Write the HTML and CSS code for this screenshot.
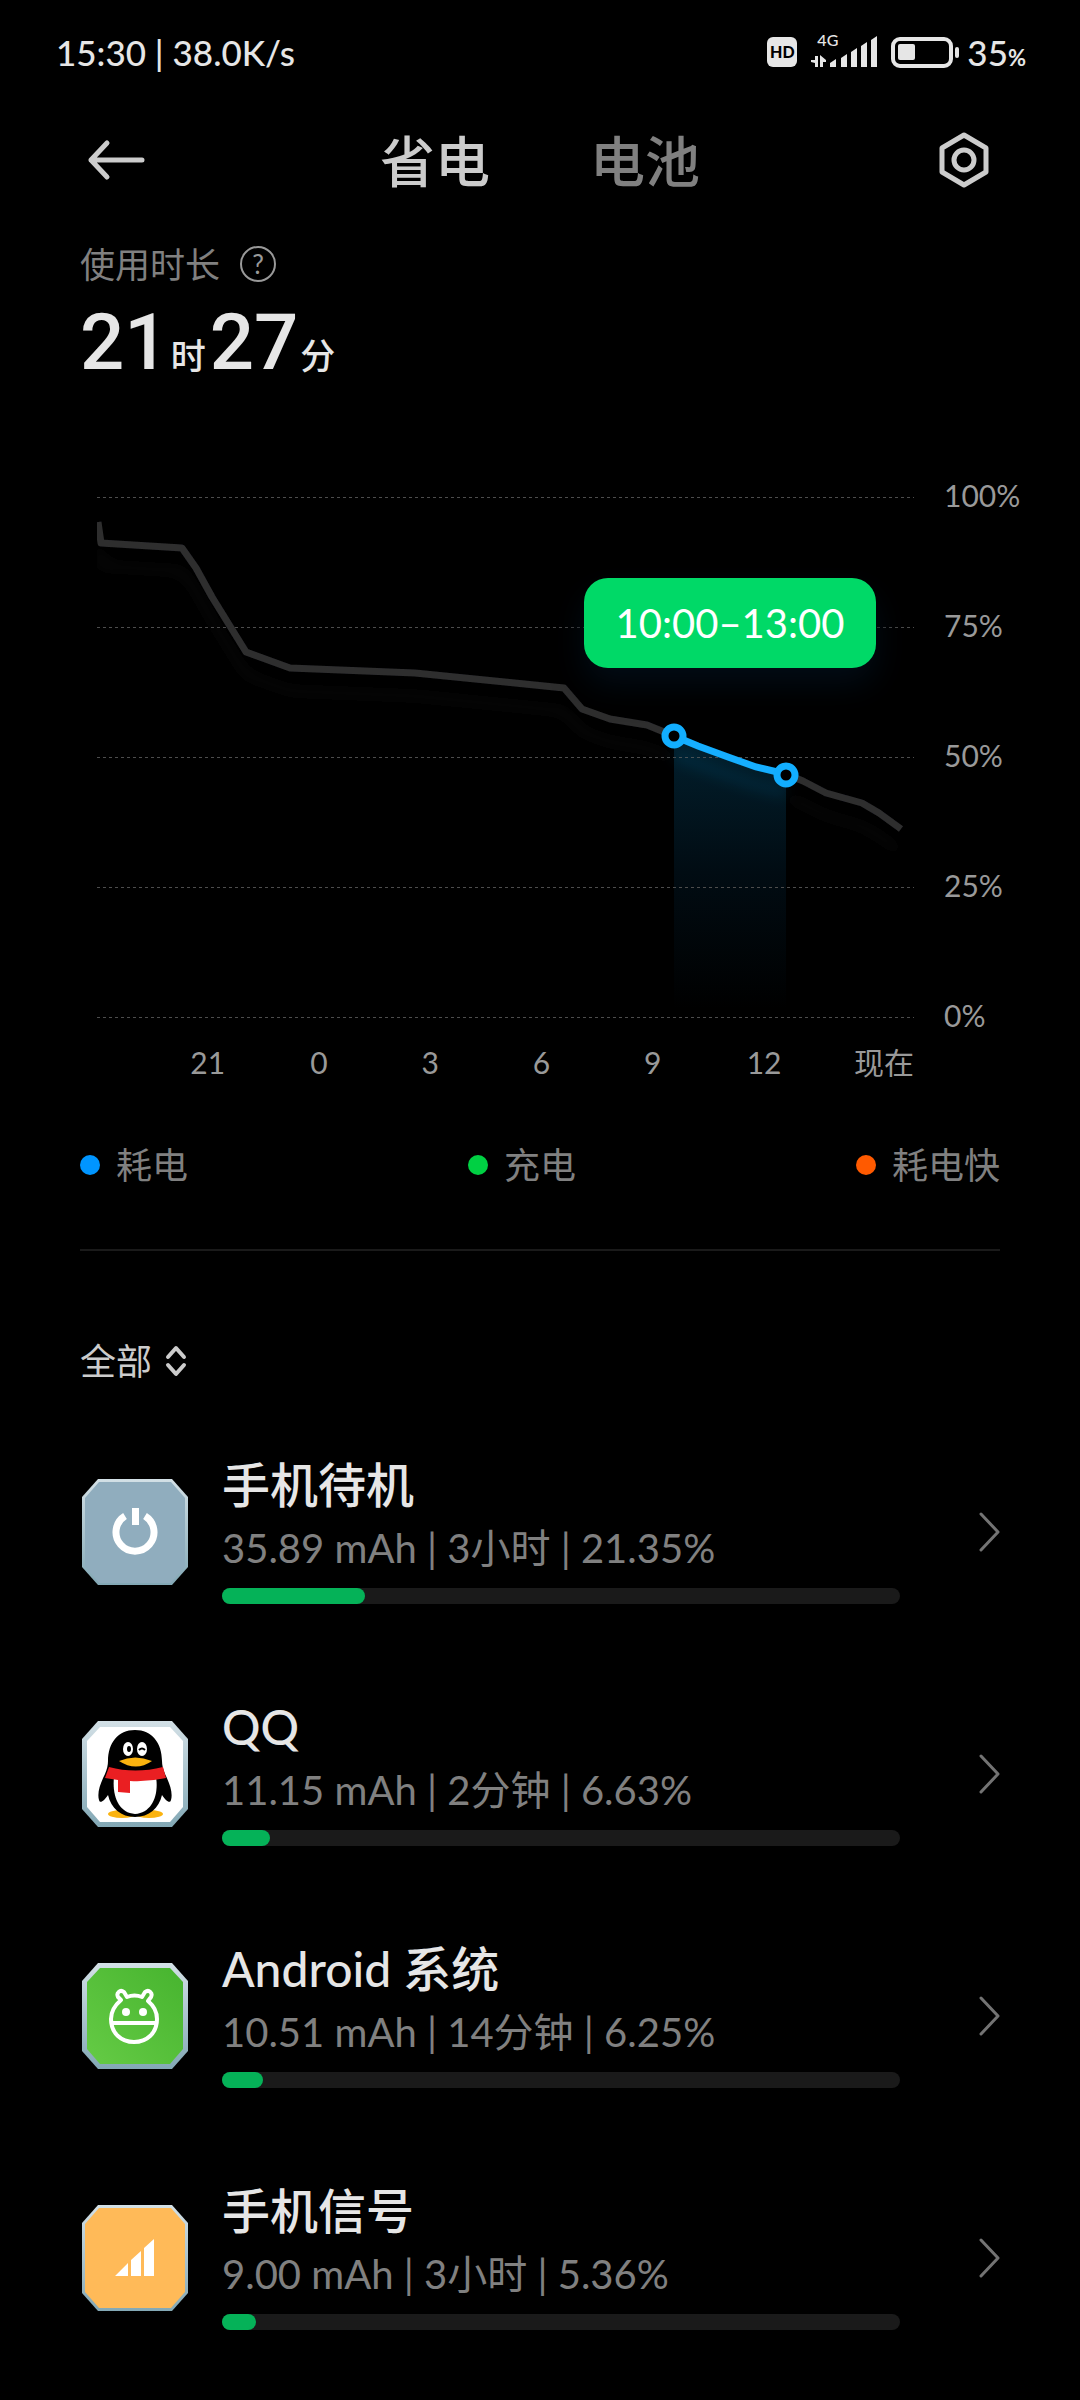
FILE: index.html
```html
<!DOCTYPE html>
<html lang="zh-CN">
<head>
    <meta charset="UTF-8">
    <meta name="viewport" content="width=device-width, initial-scale=1.0">
    <title>省电与电池</title>
    <link rel="stylesheet" href="styles.css">
</head>
<body>
    <div class="status-bar">
        <span class="clock">15:30 | 38.0K/s</span>
        <div class="status-icons">
            <span class="hd">HD</span>
            <div class="network">
                <span class="network-type">4G</span>
                <svg width="66" height="32" viewBox="0 0 66 32" fill="#e6e6e6">
                    <path d="M4 20h3v11H4v-4L0 26v-2h4zM9 19l6 5v2h-3v5H9z"/>
                    <path d="M19 27l6-4v8h-6zM30 22l6-4v13h-6zM40 16l6-4v19h-6zM50 10l6-4v25h-6zM60 4l6-4v31h-6z"/>
                </svg>
            </div>
            <svg width="68" height="31" viewBox="0 0 68 31">
                <rect x="2" y="2" width="58" height="27" rx="7" fill="none" stroke="#e6e6e6" stroke-width="4"/>
                <rect x="7" y="7" width="17" height="16" rx="2" fill="#e6e6e6"/>
                <rect x="64" y="10" width="4" height="11" rx="2" fill="#e6e6e6"/>
            </svg>
            <span class="charge">35<small>%</small></span>
        </div>
    </div>

    <header class="top-bar">
        <button type="button" class="icon-button" aria-label="返回">
            <svg width="60" height="42" viewBox="0 0 60 42" fill="none" stroke="#ccc" stroke-width="5" stroke-linecap="round" stroke-linejoin="round">
                <path d="M56 21H5M21 4L5 21l16 17"/>
            </svg>
        </button>
        <nav class="tabs">
            <button type="button" class="tab active">省电</button>
            <button type="button" class="tab">电池</button>
        </nav>
        <button type="button" class="icon-button" aria-label="设置">
            <svg width="52" height="56" viewBox="0 0 52 56" fill="none" stroke="#ccc" stroke-width="5" stroke-linejoin="round">
                <path d="M26 3L48 16v24L26 53 4 40V16z"/>
                <circle cx="26" cy="28" r="10"/>
            </svg>
        </button>
    </header>

    <main>
        <section class="usage">
            <div class="usage-label">
                <span>使用时长</span>
                <button type="button" class="help" aria-label="帮助">?</button>
            </div>
            <div class="usage-time">
                <span class="number">21</span><span class="unit">时</span><span class="number">27</span><span class="unit">分</span>
            </div>
        </section>

        <section class="chart">
            <div class="plot">
                <svg width="100%" viewBox="0 0 817 522" fill="none">
                    <defs>
                        <linearGradient id="area" x1="0" y1="0" x2="0" y2="1">
                            <stop offset="0" stop-color="#02202e"/>
                            <stop offset="0.5" stop-color="#010c13"/>
                            <stop offset="1" stop-color="#000"/>
                        </linearGradient>
                        <filter id="glow" x="-10%" y="-10%" width="120%" height="130%">
                            <feDropShadow dx="0" dy="23" stdDeviation="8" flood-color="#444" flood-opacity="0.12"/>
                        </filter>
                        <filter id="blue-glow" x="-20%" y="-20%" width="140%" height="250%">
                            <feDropShadow dx="0" dy="18" stdDeviation="7" flood-color="#12aeff" flood-opacity="0.14"/>
                        </filter>
                    </defs>
                    <path d="M577 238L601 249 631 260 659 270 689 277V512H577z" fill="url(#area)"/>
                    <g stroke="#4d4d4d" stroke-dasharray="3 3">
                        <path d="M0 .5H817M0 130.500H817M0 260.500H817M0 390.500H817M0 520.500H817"/>
                    </g>
                    <g filter="url(#glow)" stroke="#2d2d2f" stroke-width="7" stroke-linejoin="round">
                        <path d="M1 25L4 46 85 51 99 71 115 100 149 155 193 171 318 176 467 191 485 212 513 222 550 228 577 239"/>
                        <path d="M689 277L706 284 729 296 765 306 782 316 804 332"/>
                    </g>
                    <path d="M577 239L601 249 631 260 659 270 689 277" stroke="#12aeff" stroke-width="7" filter="url(#blue-glow)"/>
                    <g fill="#000" stroke="#12aeff" stroke-width="7">
                        <circle cx="577" cy="239" r="9"/>
                        <circle cx="689" cy="278" r="9"/>
                    </g>
                </svg>
                <div class="tooltip">10:00–13:00</div>
                <div class="hours">
                    <span>21</span><span>0</span><span>3</span><span>6</span><span>9</span><span>12</span>
                    <span class="now">现在</span>
                </div>
            </div>
            <div class="levels">
                <span>100%</span><span>75%</span><span>50%</span><span>25%</span><span>0%</span>
            </div>
        </section>

        <ul class="legend">
            <li class="drain">耗电</li>
            <li class="charging">充电</li>
            <li class="fast">耗电快</li>
        </ul>

        <button type="button" class="filter">
            全部
            <svg width="22" height="32" viewBox="0 0 22 32" fill="none" stroke="#ccc" stroke-width="4" stroke-linecap="round" stroke-linejoin="round">
                <path d="M3 12l8-9 8 9M3 20l8 9 8-9"/>
            </svg>
        </button>

        <ul class="apps">
            <li>
                <a href="#" class="app">
                    <svg class="app-icon" viewBox="0 0 106 106">
                        <defs>
                            <linearGradient id="frame" x1="0" y1="0" x2="0" y2="1">
                                <stop offset="0" stop-color="#d3e0e6"/>
                                <stop offset="1" stop-color="#83a8b5"/>
                            </linearGradient>
                        </defs>
                        <path d="M16 0H90L106 18V88L90 106H16L0 88V18z" fill="url(#frame)"/>
                        <path d="M17 3H89L103 19V87L89 104H17L3 87V19z" fill="#90adbe"/>
                        <path d="M43 37a19 19 0 1 0 20 0" fill="none" stroke="#fff" stroke-width="7"/>
                        <path d="M50 29h7v17h-7z" fill="#fff"/>
                    </svg>
                    <div class="app-body">
                        <h2>手机待机</h2>
                        <p>35.89 mAh | 3小时 | 21.35%</p>
                        <div class="track"><div class="fill" style="width: 21.1%"></div></div>
                    </div>
                    <svg class="chevron" width="22" height="40" viewBox="0 0 22 40"><path d="M3 2l17 18L3 38"/></svg>
                </a>
            </li>
            <li>
                <a href="#" class="app">
                    <svg class="app-icon" viewBox="0 0 106 106">
                        <path d="M16 0H90L106 18V88L90 106H16L0 88V18z" fill="url(#frame)"/>
                        <path d="M18 6H88L101 20V86L88 101H18L5 86V20z" fill="#fff"/>
                        <ellipse cx="40" cy="93" rx="14" ry="4" fill="#fbb30f"/>
                        <ellipse cx="67" cy="93" rx="14" ry="4" fill="#fbb30f"/>
                        <path d="M53 9C36 9 26 22 26 40c0 4-1 8-3 13-5 10-8 19-6 26 1 4 5 1 9-5 3 13 13 22 27 22s24-9 27-22c4 6 8 9 9 5 2-7-1-16-6-26-2-5-3-9-3-13C80 22 70 9 53 9z" fill="#000"/>
                        <path d="M32 56C30 74 36 92 53 93 70 92 77 74 74 56z" fill="#fff"/>
                        <ellipse cx="46" cy="28" rx="5" ry="7" fill="#fff"/>
                        <ellipse cx="60" cy="28" rx="5" ry="7" fill="#fff"/>
                        <ellipse cx="47" cy="28" rx="2" ry="3"/>
                        <path d="M57 29q3-3 6 0" fill="none" stroke="#000" stroke-width="2"/>
                        <path d="M37 40Q53 33 70 40 54 51 37 40z" fill="#fbb30f"/>
                        <path d="M27 46Q53 53 81 46L84 57Q66 61 48 60V72L36 71V59L23 57z" fill="#ea1f22"/>
                    </svg>
                    <div class="app-body">
                        <h2>QQ</h2>
                        <p>11.15 mAh | 2分钟 | 6.63%</p>
                        <div class="track"><div class="fill" style="width: 7.1%"></div></div>
                    </div>
                    <svg class="chevron" width="22" height="40" viewBox="0 0 22 40"><path d="M3 2l17 18L3 38"/></svg>
                </a>
            </li>
            <li>
                <a href="#" class="app">
                    <svg class="app-icon" viewBox="0 0 106 106">
                        <defs>
                            <linearGradient id="green" x1="1" y1="0" x2="0" y2="1">
                                <stop offset="0" stop-color="#47b42f"/>
                                <stop offset="1" stop-color="#65cb45"/>
                            </linearGradient>
                        </defs>
                        <path d="M16 0H90L106 18V88L90 106H16L0 88V18z" fill="url(#frame)"/>
                        <path d="M18 5H88L101 19V86L88 101H18L5 86V19z" fill="url(#green)"/>
                        <g fill="none" stroke="#fff" stroke-width="4" stroke-linejoin="round">
                            <path d="M39 37L36 34C34 30 38 26 42 29L45 34C50 32 55 32 60 34L63 29C67 26 71 30 69 34L66 38C72 43 75 49 75 56 75 70 65 79 52 79S29 70 29 56C29 49 32 43 39 37z"/>
                            <path d="M29 60H75"/>
                        </g>
                        <circle cx="44" cy="49" r="4" fill="#fff"/>
                        <circle cx="61" cy="49" r="4" fill="#fff"/>
                    </svg>
                    <div class="app-body">
                        <h2>Android 系统</h2>
                        <p>10.51 mAh | 14分钟 | 6.25%</p>
                        <div class="track"><div class="fill" style="width: 6.1%"></div></div>
                    </div>
                    <svg class="chevron" width="22" height="40" viewBox="0 0 22 40"><path d="M3 2l17 18L3 38"/></svg>
                </a>
            </li>
            <li>
                <a href="#" class="app">
                    <svg class="app-icon" viewBox="0 0 106 106">
                        <path d="M16 0H90L106 18V88L90 106H16L0 88V18z" fill="url(#frame)"/>
                        <path d="M17 3H89L103 19V87L89 103H17L3 87V19z" fill="#ffba58"/>
                        <path d="M33 71L46 58V71zM49 55L59 46V71H49zM62 43L72 34V71H62z" fill="#fff"/>
                    </svg>
                    <div class="app-body">
                        <h2>手机信号</h2>
                        <p>9.00 mAh | 3小时 | 5.36%</p>
                        <div class="track"><div class="fill" style="width: 5%"></div></div>
                    </div>
                    <svg class="chevron" width="22" height="40" viewBox="0 0 22 40"><path d="M3 2l17 18L3 38"/></svg>
                </a>
            </li>
        </ul>
    </main>
</body>
</html>
```
FILE: styles.css
```css
* {
    box-sizing: border-box;
}

body {
    margin: 0;
    background: #000;
    color: #e6e6e6;
    font-family: Lato, 'Noto Sans CJK SC', sans-serif;
}

button {
    padding: 0;
    border: none;
    background: none;
    color: inherit;
    font: inherit;
    cursor: pointer;
}

ul {
    margin: 0;
    padding: 0;
    list-style: none;
}

svg {
    display: block;
}

/* status bar */
.status-bar {
    display: flex;
    justify-content: space-between;
    align-items: center;
    height: 104px;
    padding: 0 54px 0 56px;
    font-size: 35px;
    font-weight: 500;
}

.status-icons {
    display: flex;
    align-items: center;
    gap: 14px;
}

.hd {
    width: 30px;
    border-radius: 6px;
    background: #e6e6e6;
    color: #000;
    font-size: 16px;
    font-weight: 900;
    line-height: 30px;
    text-align: center;
}

.network {
    position: relative;
}

.network-type {
    position: absolute;
    top: -4px;
    left: 6px;
    font-size: 16px;
    line-height: 16px;
}

.charge {
    margin-left: -6px;
}

.charge small {
    font-size: 22px;
    font-weight: 700;
}

/* header */
.top-bar {
    display: flex;
    justify-content: space-between;
    align-items: center;
    height: 112px;
    padding: 0 90px 0 86px;
}

.tabs {
    display: flex;
    gap: 100px;
    padding: 2px 4px 0 0;
}

.tab {
    color: #808080;
    font-size: 55px;
    font-weight: 500;
    line-height: 80px;
}

.tab.active {
    color: #ccc;
}

main {
    padding: 0 80px;
}

/* usage time */
.usage-label {
    display: flex;
    align-items: center;
    gap: 20px;
    height: 52px;
    margin-top: 22px;
    color: #808080;
    font-size: 35px;
    line-height: 52px;
}

.help {
    width: 36px;
    height: 36px;
    border: 2px solid #999;
    border-radius: 50%;
    color: #999;
    font-size: 26px;
    line-height: 32px;
}

.usage-time {
    display: flex;
    align-items: baseline;
    height: 106px;
    line-height: 106px;
}

.number {
    font-family: Roboto, sans-serif;
    font-size: 78px;
    font-weight: 500;
}

.unit {
    margin: 0 4px 0 2px;
    font-size: 35px;
    font-weight: 500;
}

/* chart */
.chart {
    display: flex;
    gap: 30px;
    margin: 101px -80px 0 17px;
    color: #999;
    font-size: 30px;
}

.plot {
    position: relative;
    flex: 1;
}

.tooltip {
    position: absolute;
    top: 81px;
    right: 38px;
    width: 292px;
    border-radius: 24px;
    background: #00d967;
    box-shadow: 0 16px 32px #020c16;
    color: #fff;
    font-size: 40px;
    line-height: 90px;
    text-align: center;
}

.hours {
    display: grid;
    grid-template-columns: repeat(6, 111fr) 94fr;
    margin-top: 23px;
    padding-left: 55px;
    line-height: 40px;
    text-align: center;
}

.hours .now {
    text-align: right;
}

.levels {
    display: flex;
    flex-direction: column;
    gap: 90px;
    width: 136px;
    margin-top: -22px;
    line-height: 40px;
}

/* legend */
.legend {
    display: flex;
    justify-content: space-between;
    padding: 56px 0 57px;
    border-bottom: 2px solid #1a1a1a;
    color: #808080;
    font-size: 36px;
    line-height: 54px;
}

.legend li {
    display: flex;
    align-items: center;
    gap: 16px;
}

.legend li::before {
    content: "";
    width: 20px;
    height: 20px;
    border-radius: 50%;
}

.legend .drain::before {
    background: #0095ff;
}

.legend .charging::before {
    background: #00d043;
}

.legend .fast::before {
    background: #ff5a00;
}

/* app list */
.filter {
    display: flex;
    align-items: center;
    gap: 13px;
    margin: 83px 0 23px;
    color: #ccc;
    font-size: 36px;
    line-height: 54px;
}

.app {
    display: flex;
    align-items: center;
    height: 242px;
    color: inherit;
    text-decoration: none;
}

.app-icon {
    width: 106px;
    height: 106px;
    margin: 0 34px 0 2px;
}

.app-body {
    flex: 1;
    margin-right: 78px;
    padding-bottom: 8px;
}

.app h2 {
    margin: 0;
    font-size: 48px;
    font-weight: 500;
    line-height: 66px;
}

.app p {
    margin: 0;
    color: #808080;
    font-size: 40px;
    line-height: 60px;
}

.track {
    height: 16px;
    margin-top: 10px;
    border-radius: 8px;
    background: #1a1a1a;
}

.fill {
    height: 16px;
    border-radius: 8px;
    background: #05b258;
}

.chevron {
    fill: none;
    stroke: #737373;
    stroke-width: 3;
    stroke-linecap: round;
    stroke-linejoin: round;
}
```
